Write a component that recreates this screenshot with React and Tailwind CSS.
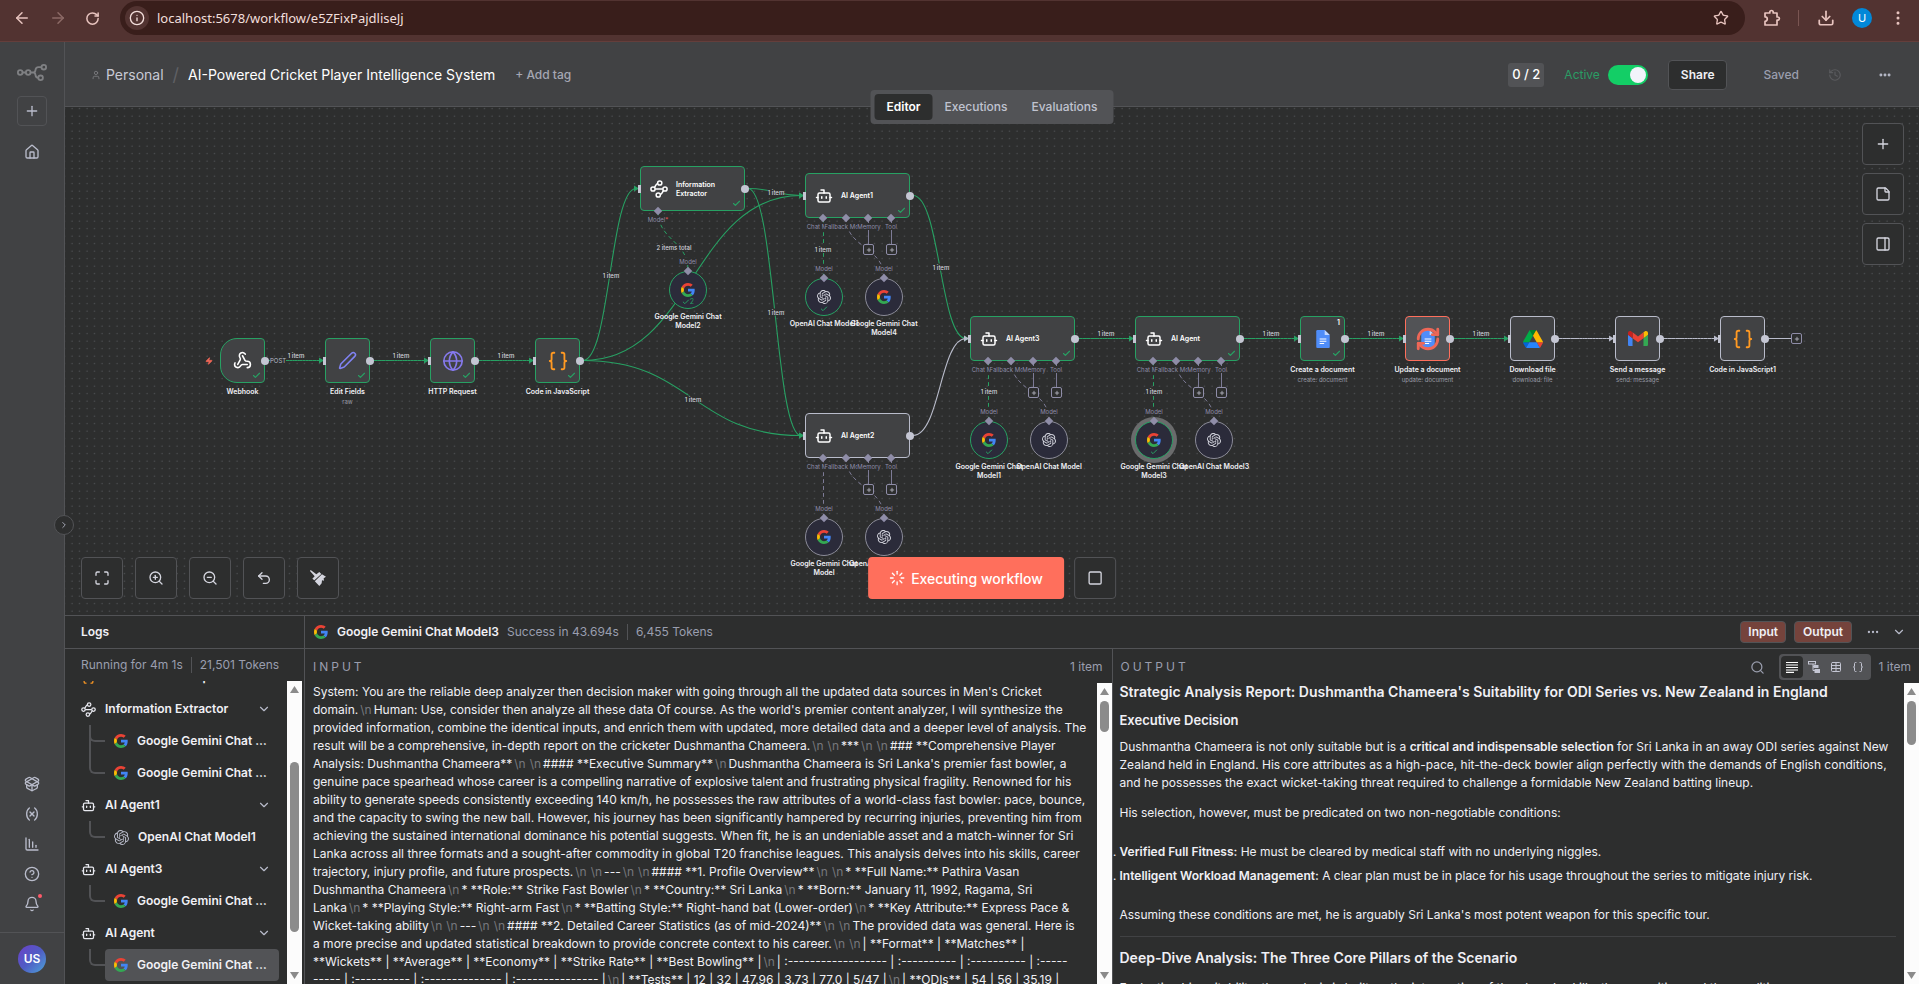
import React from "react";
import {
  ArrowLeft, ArrowRight, RotateCw, Info, Star, Download, EllipsisVertical, Plus, House,
  PackageOpen, Variable, ChartColumnDecreasing, CircleQuestionMark, Bell, ChevronRight, ChevronDown,
  User, History, Ellipsis, StickyNote, PanelRight, Maximize, ZoomIn, ZoomOut, Undo2, Square, Loader,
  Webhook, Pen, Globe, Braces, Bot, Check, Search, Table, Zap, RefreshCw,
} from "lucide-react";
import { SiOpenai } from "react-icons/si";

/* ---------- drawings ---------- */

function GoogleIcon({ className }) {
  return (
    <svg viewBox="0 0 48 48" className={className} aria-hidden="true">
      <path fill="#EA4335" d="M24 9.5c3.54 0 6.71 1.22 9.21 3.6l6.85-6.85C35.9 2.38 30.47 0 24 0 14.62 0 6.51 5.38 2.56 13.22l7.98 6.19C12.43 13.72 17.74 9.5 24 9.5z" />
      <path fill="#4285F4" d="M46.98 24.55c0-1.57-.15-3.09-.38-4.55H24v9.02h12.94c-.58 2.96-2.26 5.48-4.78 7.18l7.73 6c4.51-4.18 7.09-10.36 7.09-17.65z" />
      <path fill="#FBBC05" d="M10.53 28.59c-.48-1.45-.76-2.99-.76-4.59s.27-3.14.76-4.59l-7.98-6.19C.92 16.46 0 20.12 0 24c0 3.88.92 7.54 2.56 10.78l7.97-6.19z" />
      <path fill="#34A853" d="M24 48c6.48 0 11.93-2.13 15.89-5.81l-7.73-6c-2.15 1.45-4.92 2.3-8.16 2.3-6.26 0-11.57-4.22-13.47-9.91l-7.98 6.19C6.51 42.62 14.62 48 24 48z" />
    </svg>
  );
}

function DocsIcon({ className }) {
  return (
    <svg viewBox="0 0 24 32" className={className} aria-hidden="true">
      <path fill="#4f8df9" d="M2 0h13l9 9v21a2 2 0 0 1-2 2H2a2 2 0 0 1-2-2V2a2 2 0 0 1 2-2z" />
      <path fill="#c3d8fd" d="M15 0l9 9h-9z" />
      <path stroke="#fff" strokeWidth="2" d="M6 16h12M6 20h12M6 24h8" />
    </svg>
  );
}

function DriveIcon({ className }) {
  return (
    <svg viewBox="0 0 87.3 78" className={className} aria-hidden="true">
      <path fill="#0066da" d="m6.6 66.85 3.85 6.65c.8 1.4 1.95 2.5 3.3 3.3l13.75-23.8h-27.5c0 1.55.4 3.1 1.2 4.5z" />
      <path fill="#00ac47" d="m43.65 25-13.75-23.8c-1.35.8-2.5 1.9-3.3 3.3l-25.4 44a9.06 9.06 0 0 0 -1.2 4.5h27.5z" />
      <path fill="#ea4335" d="m73.55 76.8c1.35-.8 2.5-1.9 3.3-3.3l1.6-2.75 7.65-13.25c.8-1.4 1.2-2.95 1.2-4.5h-27.502l5.852 11.5z" />
      <path fill="#00832d" d="m43.65 25 13.75-23.8c-1.35-.8-2.9-1.2-4.5-1.2h-18.5c-1.6 0-3.15.45-4.5 1.2z" />
      <path fill="#2684fc" d="m59.8 53h-32.3l-13.75 23.8c1.35.8 2.9 1.2 4.5 1.2h50.8c1.6 0 3.15-.45 4.5-1.2z" />
      <path fill="#ffba00" d="m73.4 26.5-12.7-22c-.8-1.4-1.95-2.5-3.3-3.3l-13.75 23.8 16.15 28h27.45c0-1.55-.4-3.1-1.2-4.5z" />
    </svg>
  );
}

function GmailIcon({ className }) {
  return (
    <svg viewBox="52 42 88 66" className={className} aria-hidden="true">
      <path fill="#4285f4" d="M58 108h14V74L52 59v43c0 3.32 2.69 6 6 6" />
      <path fill="#34a853" d="M120 108h14c3.32 0 6-2.69 6-6V59l-20 15" />
      <path fill="#fbbc04" d="M120 48v26l20-15v-8c0-7.42-8.47-11.65-14.4-7.2" />
      <path fill="#ea4335" d="M72 74V48l24 18 24-18v26L96 92" />
      <path fill="#c5221f" d="M52 51v8l20 15V48l-5.6-4.2c-5.94-4.45-14.4-.22-14.4 7.2" />
    </svg>
  );
}

function ExtractorIcon({ className }) {
  return (
    <svg viewBox="0 0 24 24" fill="none" stroke="currentColor" strokeWidth="2" className={className} aria-hidden="true">
      <circle cx="13" cy="4" r="2.8" />
      <circle cx="4" cy="12" r="2.8" />
      <circle cx="20" cy="12" r="2.8" />
      <circle cx="11" cy="20" r="2.8" />
      <path d="M7 12h10M6 10c2-3 2-5 4.500-5.500M18 14c-2 3-2 5-4.500 5.500" />
    </svg>
  );
}

function LogoIcon({ className }) {
  return (
    <svg viewBox="0 0 30 17" fill="none" stroke="currentColor" strokeWidth="1.8" className={className} aria-hidden="true">
      <circle cx="3.200" cy="8.500" r="2.300" />
      <circle cx="11.200" cy="8.500" r="2.300" />
      <circle cx="26.800" cy="3.200" r="2.300" />
      <circle cx="23.600" cy="13.800" r="2.300" />
      <path d="M5.500 8.500h3.400M13.500 8.500h3.500M24.500 3.200h-3a3 3 0 0 0-3 2.700c-.2 1.800-.8 2.600-2 2.600 1.200 0 1.800.8 2 2.600a3 3 0 0 0 2.800 2.700" />
    </svg>
  );
}

function BroomIcon({ className }) {
  return (
    <svg viewBox="0 0 24 24" fill="currentColor" className={className} aria-hidden="true">
      <path d="M1 0l8.500 6.500L14 3l3 3L6.500 15.500l-3-2.500L7 9.500 0 1.500z" />
      <path d="M18 6.500l6 3.500-3.500 2.500.5 3.500-3-.5-.5 4.500-3.500 4L7.200 17z" />
    </svg>
  );
}

function ExtensionIcon({ className }) {
  return (
    <svg viewBox="0 0 18 18" fill="none" stroke="currentColor" strokeWidth="1.700" strokeLinejoin="round" className={className} aria-hidden="true">
      <path d="M2 4h4.800V3.200a1.700 1.700 0 0 1 3.400 0V4H14v4h.8a1.600 1.600 0 0 1 0 3.200H14V16H2v-3.600a2.300 2.300 0 0 0 0-4.600z" />
    </svg>
  );
}

function TextLinesIcon({ className }) {
  return (
    <svg viewBox="0 0 12 12" stroke="currentColor" strokeWidth="1.200" className={className} aria-hidden="true">
      <path d="M0 1.500h12M0 4h12M0 6.500h12M0 9h12M0 11.400h8" />
    </svg>
  );
}

function SchemaIcon({ className }) {
  return (
    <svg viewBox="0 0 12 12" fill="none" stroke="currentColor" className={className} aria-hidden="true">
      <rect x="0.500" y="0.500" width="7" height="2.500" />
      <path d="M5 3v6.500h2M5 5.500h2" />
      <rect x="6" y="4.500" width="4" height="2" fill="currentColor" />
      <rect x="7" y="8.500" width="4.500" height="3" fill="currentColor" />
    </svg>
  );
}

/* ---------- canvas data ---------- */

const NODES = [
  { x: 155, y: 231, label: "Webhook", icon: <Webhook className="size-[19px]" strokeWidth={2} />, tint: "text-white", status: "ok", trigger: true },
  { x: 260, y: 231, label: "Edit Fields", sub: "raw", icon: <Pen className="size-[19px]" strokeWidth={2} />, tint: "text-[#8183f4]", status: "ok" },
  { x: 365, y: 231, label: "HTTP Request", icon: <Globe className="size-[22px]" strokeWidth={1.8} />, tint: "text-[#8579ec]", status: "ok" },
  { x: 470, y: 231, label: "Code in JavaScript", icon: <Braces className="size-[22px]" strokeWidth={2} />, tint: "text-[#ff9922]", status: "ok" },
  { x: 1235, y: 209, label: "Create a document", sub: "create: document", icon: <DocsIcon className="h-[18px] w-[14px]" />, status: "ok", badge: "1" },
  { x: 1340, y: 209, label: "Update a document", sub: "update: document", icon: <DocsIcon className="h-[18px] w-[14px]" />, status: "running" },
  { x: 1445, y: 209, label: "Download file", sub: "download: file", icon: <DriveIcon className="h-[18px] w-[20px]" />, status: "idle" },
  { x: 1550, y: 209, label: "Send a message", sub: "send: message", icon: <GmailIcon className="h-[15px] w-[20px]" />, status: "idle" },
  { x: 1655, y: 209, label: "Code in JavaScript1", icon: <Braces className="size-[22px]" strokeWidth={2} />, tint: "text-[#ff9922]", status: "idle" },
];

const AGENTS = [
  { x: 740, y: 66, label: "AI Agent1", ok: true },
  { x: 740, y: 306, label: "AI Agent2", ok: false },
  { x: 905, y: 209, label: "AI Agent3", ok: true },
  { x: 1070, y: 209, label: "AI Agent", ok: true },
];

const MODELS = [
  { x: 604, y: 164, label: "Google Gemini Chat Model2", kind: "google", ok: true, runs: "2" },
  { x: 740, y: 171, label: "OpenAI Chat Model1", kind: "openai", ok: true },
  { x: 800, y: 171, label: "Google Gemini Chat Model4", kind: "google" },
  { x: 740, y: 411, label: "Google Gemini Chat Model", kind: "google" },
  { x: 800, y: 411, label: "OpenAI Chat Model2", kind: "openai" },
  { x: 905, y: 314, label: "Google Gemini Chat Model1", kind: "google", ok: true },
  { x: 965, y: 314, label: "OpenAI Chat Model", kind: "openai" },
  { x: 1070, y: 314, label: "Google Gemini Chat Model3", kind: "google", ok: true, selected: true },
  { x: 1130, y: 314, label: "OpenAI Chat Model3", kind: "openai" },
];

const EDGES = [
  { from: [200, 253.5], to: [260, 253.5], ok: true },
  { from: [305, 253.5], to: [365, 253.5], ok: true },
  { from: [410, 253.5], to: [470, 253.5], ok: true },
  { from: [515, 253.5], to: [575, 81.5], ok: true },
  { from: [515, 253.5], to: [740, 88.5], ok: true },
  { from: [515, 253.5], to: [740, 328.5], ok: true },
  { from: [680, 81.5], to: [740, 88.5], ok: true },
  { from: [680, 81.5], to: [740, 328.5], ok: true },
  { from: [845, 88.5], to: [905, 231.5], ok: true },
  { from: [845, 328.5], to: [905, 231.5], ok: false },
  { from: [1010, 231.5], to: [1070, 231.5], ok: true },
  { from: [1175, 231.5], to: [1235, 231.5], ok: true },
  { from: [1280, 231.5], to: [1340, 231.5], ok: true },
  { from: [1385, 231.5], to: [1445, 231.5], ok: true },
  { from: [1490, 231.5], to: [1550, 231.5], ok: false },
  { from: [1595, 231.5], to: [1655, 231.5], ok: false },
];

const EDGE_LABELS = [
  [231, 248], [336, 248], [441, 248], [546, 168], [628, 292], [711, 85], [711, 205], [876, 160],
  [1041, 226], [1206, 226], [1311, 226], [1416, 226], [758, 142], [924, 284], [1089, 284],
];

const SUB_EDGES = [
  { from: [593, 104], to: [623, 163], ok: true },
  { from: [758.5, 111], to: [758.5, 170], ok: true },
  { from: [781, 111], to: [819, 170] },
  { from: [758.5, 351], to: [758.5, 410] },
  { from: [781, 351], to: [819, 410] },
  { from: [923.5, 254], to: [923.5, 313], ok: true },
  { from: [946, 254], to: [984, 313] },
  { from: [1088.5, 254], to: [1088.5, 313], ok: true },
  { from: [1111, 254], to: [1149, 313] },
];

const GREEN = "#27a163";
const PALE = "#b9bccb";
const VIOLET = "#7d7b96";

function Edges() {
  return (
    <svg className="absolute inset-0 size-full" fill="none" aria-hidden="true">
      <defs>
        <pattern id="dots" x="3" y="5" width="7.5" height="7.5" patternUnits="userSpaceOnUse">
          <circle cx="4" cy="4" r="0.600" fill="#63656a" />
        </pattern>
      </defs>
      <rect width="100%" height="100%" fill="url(#dots)" />
      {SUB_EDGES.map(({ from: [a, b], to: [c, d], ok }) => (
        <path key={`${a}-${b}`} stroke={ok ? GREEN : VIOLET} strokeDasharray="4 3" d={`M${a} ${b}C${a} ${(b + d) / 2} ${c} ${(b + d) / 2} ${c} ${d}`} />
      ))}
      {AGENTS.map(({ x, y }) => (
        <path key={`${x}-${y}`} stroke={VIOLET} d={`M${x + 63.5} ${y + 45}v26M${x + 86.5} ${y + 45}v26`} />
      ))}
      {EDGES.map(({ from: [a, b], to: [c, d], ok }) => {
        const m = (a + c) / 2;
        const color = ok ? GREEN : PALE;
        return (
          <g key={`${a}-${b}-${c}-${d}`}>
            <path stroke={color} strokeWidth={b === d ? 1 : 1.1} d={`M${a + 3} ${b}C${m} ${b} ${m} ${d} ${c - 4} ${d}`} />
            <path fill={color} d={`M${c - 6} ${d - 3}l5 3l-5 3z`} />
          </g>
        );
      })}
      <path stroke={PALE} d="M1703 231.5h23" />
    </svg>
  );
}

function OutputHandle() {
  return <span className="absolute top-1/2 -right-1 size-2 -translate-y-1/2 rounded-full bg-[#c4c6d3]" />;
}
function InputHandle() {
  return <span className="absolute top-1/2 -left-[2px] h-2 w-[3px] -translate-y-1/2 bg-[#c4c6d3]" />;
}
function Diamond({ className }) {
  return <span className={`absolute size-[6px] rotate-45 bg-[#8f8da8] ${className}`} />;
}
function NodeCheck({ className }) {
  return <Check className={`absolute size-[9px] text-[#27a163] ${className}`} strokeWidth={3} />;
}
function AddBox({ className }) {
  return (
    <button type="button" aria-label="Add node" className={`absolute flex size-[11px] items-center justify-center rounded-[2px] border border-[#8f8da8] bg-[#2d2e2e] text-[#c4c6d3] ${className}`}>
      <Plus className="size-[6px]" strokeWidth={3} />
    </button>
  );
}
function SlotLabel({ className, children }) {
  return <span className={`absolute -translate-x-1/2 bg-[#2d2e2e] text-[6px] leading-[7px] whitespace-nowrap text-[#8f8da8] ${className}`}>{children}</span>;
}

const BORDERS = {
  ok: "border-[#27a163] bg-[#414244]",
  idle: "border-[#b9bccb] bg-[#414244]",
  running: "border-[#ff6f5c] bg-[#525356]",
};

function SquareNode({ x, y, label, sub, icon, tint = "", status, trigger, badge }) {
  return (
    <div className="absolute size-[45px]" style={{ left: x, top: y }}>
      <div className={`relative flex size-full items-center justify-center border ${trigger ? "rounded-l-[17px] rounded-r-[4px]" : "rounded-[4px]"} ${BORDERS[status]} ${tint}`}>
        {icon}
        {status === "ok" && <NodeCheck className="right-[3px] bottom-[2px]" />}
        {badge && <span className="absolute top-[2px] right-1 text-[7px] leading-2 font-semibold text-white">{badge}</span>}
        {status === "running" && <RefreshCw className="absolute size-[26px] text-[#ee6757]" strokeWidth={2.6} />}
      </div>
      {!trigger && <InputHandle />}
      <OutputHandle />
      <div className="absolute top-[49px] left-1/2 flex -translate-x-1/2 flex-col items-center gap-[2px] whitespace-nowrap">
        <span className="text-[7px] leading-[9px] font-semibold text-[#f0f0f5]">{label}</span>
        {sub && <span className="text-[6px] leading-[8px] text-[#9a9ca6]">{sub}</span>}
      </div>
    </div>
  );
}

function AgentNode({ x, y, label, ok }) {
  return (
    <div className="absolute h-[45px] w-[105px]" style={{ left: x, top: y }}>
      <div className={`flex size-full items-center gap-2 rounded-[4px] border pl-[9px] ${ok ? BORDERS.ok : BORDERS.idle}`}>
        <Bot className="size-[18px] text-white" strokeWidth={2} />
        <span className="text-[7px] leading-[9px] font-semibold text-white">{label}</span>
      </div>
      {ok && <NodeCheck className="right-1 bottom-[3px]" />}
      <InputHandle />
      <OutputHandle />
      <SlotLabel className="top-[50px] left-[18px]">Chat Model</SlotLabel>
      <SlotLabel className="top-[50px] left-[41px]">Fallback Model</SlotLabel>
      <SlotLabel className="top-[50px] left-[64px]">Memory</SlotLabel>
      <SlotLabel className="top-[50px] left-[86px]">Tool</SlotLabel>
      <Diamond className="top-[42px] left-[15px]" />
      <Diamond className="top-[42px] left-[38px]" />
      <Diamond className="top-[42px] left-[60px]" />
      <Diamond className="top-[42px] left-[83px]" />
      <AddBox className="top-[71px] left-[58px]" />
      <AddBox className="top-[71px] left-[81px]" />
    </div>
  );
}

function ModelNode({ x, y, label, kind, ok, runs, selected }) {
  return (
    <div className="absolute size-[38px]" style={{ left: x, top: y }}>
      <div className={`flex size-full items-center justify-center rounded-full border bg-[#2b2b3a] ${ok ? "border-[#27a163]" : "border-[#8b8b98]"} ${selected ? "ring-4 ring-[#6a6b6c]" : ""}`}>
        {kind === "google" ? <GoogleIcon className="size-[14px]" /> : <SiOpenai className="size-[14px] text-[#d5d6df]" />}
      </div>
      {ok && (
        <div className="absolute bottom-[3px] left-1/2 flex -translate-x-1/2 items-center text-[7px] leading-2 text-[#27a163]">
          <Check className="size-2" strokeWidth={3} />
          {runs}
        </div>
      )}
      <SlotLabel className="-top-[13px] left-[19px]">Model</SlotLabel>
      <Diamond className="-top-[3px] left-4" />
      <div className="absolute top-[41px] left-1/2 w-[78px] -translate-x-1/2 text-center text-[7px] leading-[9px] font-semibold text-[#f0f0f5]">{label}</div>
    </div>
  );
}

const CONTROL = "flex size-[42px] items-center justify-center rounded-[4px] border border-[#525356] bg-[#2d2e2e] text-[#d5d6df]";

function Canvas() {
  return (
    <main className="relative min-h-0 flex-1 overflow-hidden bg-[#2d2e2e]">
      <Edges />
      {EDGE_LABELS.map(([x, y]) => (
        <span key={`${x}-${y}`} className="absolute -translate-x-1/2 -translate-y-1/2 bg-[#2d2e2e] text-[6px] leading-[7px] font-medium whitespace-nowrap text-[#d5d6df]" style={{ left: x, top: y }}>1 item</span>
      ))}
      <span className="absolute top-[97px] left-[609px] -translate-x-1/2 translate-y-[40px] bg-[#2d2e2e] text-[6px] leading-[7px] font-medium whitespace-nowrap text-[#d5d6df]">2 items total</span>
      {MODELS.map((m) => <ModelNode key={m.label} {...m} />)}
      {AGENTS.map((a) => <AgentNode key={a.label} {...a} />)}
      <div className="absolute top-[59px] left-[575px] h-[45px] w-[105px]">
        <div className={`flex size-full items-center gap-2 rounded-[4px] border pl-[9px] ${BORDERS.ok}`}>
          <ExtractorIcon className="size-[18px] text-white" />
          <span className="w-[50px] text-[7px] leading-[9px] font-semibold text-white">Information Extractor</span>
        </div>
        <NodeCheck className="right-1 bottom-[3px]" />
        <InputHandle />
        <OutputHandle />
        <SlotLabel className="top-[50px] left-[18px]">Model<span className="text-[#ff5a5a]">*</span></SlotLabel>
        <Diamond className="top-[42px] left-[15px]" />
      </div>
      {NODES.map((n) => <SquareNode key={n.label} {...n} />)}
      <Zap className="absolute top-[250px] left-[140px] size-2 fill-[#ee6757] text-[#ee6757]" />
      <span className="absolute top-[250px] left-[205px] bg-[#2d2e2e] text-[6px] leading-[7px] text-[#b9bccb]">POST</span>
      <AddBox className="top-[226px] left-[1726px]" />

      <div className="absolute top-4 right-[15px] flex flex-col gap-2">
        <button type="button" aria-label="Add node" className={CONTROL}><Plus className="size-4" /></button>
        <button type="button" aria-label="Add sticky note" className={CONTROL}><StickyNote className="size-4" /></button>
        <button type="button" aria-label="Toggle panel" className={CONTROL}><PanelRight className="size-4" /></button>
      </div>

      <div className="absolute bottom-4 left-4 flex gap-3">
        <button type="button" aria-label="Fit view" className={CONTROL}><Maximize className="size-4" /></button>
        <button type="button" aria-label="Zoom in" className={CONTROL}><ZoomIn className="size-4" /></button>
        <button type="button" aria-label="Zoom out" className={CONTROL}><ZoomOut className="size-4" /></button>
        <button type="button" aria-label="Undo" className={CONTROL}><Undo2 className="size-4" /></button>
        <button type="button" aria-label="Tidy up" className={CONTROL}><BroomIcon className="size-4" /></button>
      </div>

      <div className="absolute bottom-4 left-1/2 flex -translate-x-1/2 gap-[10px]">
        <button type="button" className="flex h-[42px] items-center gap-[6px] rounded-[4px] bg-[#ff6f5c] px-[21px] text-[14px] font-medium whitespace-nowrap text-white">
          <Loader className="size-4" />
          Executing workflow
        </button>
        <button type="button" aria-label="Stop" className={CONTROL}><Square className="size-4" /></button>
      </div>
    </main>
  );
}

/* ---------- chrome around the canvas ---------- */

function BrowserBar() {
  return (
    <div className="flex h-[42px] shrink-0 items-start border-b border-[#643e3b] bg-[#523331] text-[#e8c4bf]">
      <div className="flex h-9 w-[120px] items-center gap-[18px] pl-[13px]">
        <button type="button" aria-label="Back"><ArrowLeft className="size-[18px]" /></button>
        <button type="button" aria-label="Forward" className="text-[#8c6a66]"><ArrowRight className="size-[18px]" /></button>
        <button type="button" aria-label="Reload"><RotateCw className="size-[15px]" strokeWidth={2.4} /></button>
      </div>
      <div className="mt-px flex h-[34px] flex-1 items-center rounded-full bg-[#391e1b] pr-4 pl-[5px]">
        <button type="button" aria-label="Site information" className="flex size-6 items-center justify-center rounded-full bg-[#523331] text-[#f3dedb]"><Info className="size-4" /></button>
        <input aria-label="Address" defaultValue="localhost:5678/workflow/e5ZFixPajdliseJj" className="ml-2 h-full min-w-0 flex-1 bg-transparent font-['Noto_Sans',sans-serif] text-[13px] text-[#f1dfdc] outline-none" />
        <button type="button" aria-label="Bookmark"><Star className="size-4" /></button>
      </div>
      <div className="flex h-9 items-center pr-3 pl-[18px]">
        <button type="button" aria-label="Extensions"><ExtensionIcon className="size-[18px]" /></button>
        <span className="ml-[17px] h-4 w-px bg-[#7a5552]" />
        <button type="button" aria-label="Downloads" className="ml-[18px]"><Download className="size-[18px]" strokeWidth={2.3} /></button>
        <button type="button" aria-label="Profile" className="ml-[17px] flex size-5 items-center justify-center rounded-full bg-[#0288d8] text-[11px] text-white">U</button>
        <button type="button" aria-label="Browser menu" className="ml-[17px]"><EllipsisVertical className="size-[18px]" /></button>
      </div>
    </div>
  );
}

function Sidebar() {
  return (
    <nav className="relative flex w-[65px] shrink-0 flex-col items-center border-r border-[#525356] bg-[#414244] text-[#b9bccb]">
      <LogoIcon className="mt-[22px] h-[17px] w-[30px] text-[#7f8083]" />
      <button type="button" aria-label="Create" className="mt-[15px] flex size-[30px] items-center justify-center rounded-[4px] border border-[#525356]"><Plus className="size-4" /></button>
      <a href="#home" aria-label="Home" className="mt-[18px]"><House className="size-4" /></a>
      <div className="mt-auto flex flex-col gap-[14px] pb-5">
        <a href="#templates" aria-label="Templates"><PackageOpen className="size-4" /></a>
        <a href="#variables" aria-label="Variables"><Variable className="size-4" /></a>
        <a href="#insights" aria-label="Insights"><ChartColumnDecreasing className="size-4" /></a>
        <a href="#help" aria-label="Help"><CircleQuestionMark className="size-4" /></a>
        <a href="#news" aria-label="What's new" className="relative">
          <Bell className="size-4" />
          <span className="absolute -top-[2px] -right-[2px] size-1 rounded-full bg-[#ff5a6a]" />
        </a>
      </div>
      <div className="flex h-[52px] w-full items-center justify-center border-t border-[#525356]">
        <button type="button" className="size-7 rounded-full bg-linear-to-br from-[#6a3fc8] via-[#4f5bc4] to-[#4aa3d8] text-[12px] font-semibold text-white">US</button>
      </div>
      <button type="button" aria-label="Expand sidebar" className="absolute top-[473px] -right-[10px] z-10 flex size-5 items-center justify-center rounded-full border border-[#525356] bg-[#2d2e2e]"><ChevronRight className="size-[10px]" /></button>
    </nav>
  );
}

function Header() {
  return (
    <header className="flex h-[65px] shrink-0 items-center justify-between border-b border-[#525356] bg-[#414244] pt-px pr-[27px] pl-[26px] text-[12px] text-[#b9bccb]">
      <div className="flex items-center text-[14px]">
        <User className="size-[10px] text-[#7f8083]" />
        <a href="#personal" className="ml-[5px] text-[#c8cad6]">Personal</a>
        <span className="mx-[9px] text-[18px] text-[#5f6064]">/</span>
        <h1 className="text-white">AI-Powered Cricket Player Intelligence System</h1>
        <button type="button" className="ml-5 text-[12px] font-medium text-[#a5a7b3]">+ Add tag</button>
      </div>
      <div className="flex items-center">
        <span className="flex h-6 items-center rounded-[3px] bg-[#525356] px-1 text-[13px] font-medium text-white">0 / 2</span>
        <label className="ml-5 flex items-center gap-2 text-[#2a9d64]">
          Active
          <input type="checkbox" defaultChecked className="flex h-5 w-10 appearance-none items-center justify-end rounded-full bg-[#13ce66] px-[2px] before:size-4 before:rounded-full before:bg-[#f2f3fa]" />
        </label>
        <button type="button" className="ml-5 h-[30px] rounded-[4px] border border-[#525356] bg-[#2d2e2e] px-3 font-semibold text-[#f0f0f5]">Share</button>
        <span className="ml-9 font-medium text-[#9a9eae]">Saved</span>
        <button type="button" aria-label="History" className="ml-[29px] text-[#5a5b5e]"><History className="size-[14px]" /></button>
        <button type="button" aria-label="More" className="ml-9"><Ellipsis className="size-[14px]" strokeWidth={3} /></button>
      </div>
    </header>
  );
}

function Tabs() {
  return (
    <div role="tablist" className="absolute top-12 left-1/2 z-10 flex -translate-x-1/2 rounded-[4px] bg-[#525356] p-1 text-[12px] font-medium text-[#c0c3d0]">
      <button type="button" role="tab" aria-selected="true" className="h-[26px] rounded-[4px] bg-[#2d2e2e] px-3 font-semibold text-white">Editor</button>
      <button type="button" role="tab" aria-selected="false" className="h-[26px] px-3">Executions</button>
      <button type="button" role="tab" aria-selected="false" className="h-[26px] px-3">Evaluations</button>
    </div>
  );
}

/* ---------- logs panel ---------- */

function Scrollbar({ children }) {
  return (
    <div className="flex w-[15px] shrink-0 flex-col items-center justify-between bg-[#fcfcfc] py-[5px]" aria-hidden="true">
      <svg viewBox="0 0 9 7" className="h-[7px] w-[9px]"><path fill="#8b8b8b" d="M4.500 0 9 7H0z" /></svg>
      <div className="w-[9px] flex-1 py-[6px]">{children}</div>
      <svg viewBox="0 0 9 7" className="h-[7px] w-[9px]"><path fill="#8b8b8b" d="M4.500 7 9 0H0z" /></svg>
    </div>
  );
}

const LOGS = [
  { label: "Code in JavaScript", kind: "code" },
  { label: "Information Extractor", kind: "extractor", open: true },
  { label: "Google Gemini Chat Model2", kind: "google", child: "mid" },
  { label: "Google Gemini Chat Model2", kind: "google", child: "last" },
  { label: "AI Agent1", kind: "bot", open: true },
  { label: "OpenAI Chat Model1", kind: "openai", child: "last" },
  { label: "AI Agent3", kind: "bot", open: true },
  { label: "Google Gemini Chat Model1", kind: "google", child: "last" },
  { label: "AI Agent", kind: "bot", open: true },
  { label: "Google Gemini Chat Model3", kind: "google", child: "last", active: true },
];

function LogIcon({ kind }) {
  if (kind === "google") return <GoogleIcon className="size-[14px] shrink-0" />;
  if (kind === "openai") return <SiOpenai className="size-[15px] shrink-0 text-[#b9bccb]" />;
  if (kind === "bot") return <Bot className="size-[15px] shrink-0 text-[#e8e9f0]" />;
  if (kind === "code") return <Braces className="size-[15px] shrink-0 text-[#ff9922]" />;
  return <ExtractorIcon className="size-[15px] shrink-0 text-[#e8e9f0]" />;
}

function LogRow({ label, kind, open, child, active }) {
  if (child) {
    return (
      <li className="flex h-8 pl-6">
        <span className={`relative w-4 shrink-0 ${child === "mid" ? "border-l-2 border-[#525356]" : ""}`}>
          <span className={`absolute top-0 h-[17px] w-4 rounded-bl-[6px] border-b-2 border-l-2 border-[#525356] ${child === "mid" ? "-left-[2px]" : "left-0"}`} />
        </span>
        <button type="button" className={`flex w-[174px] items-center gap-[9px] rounded-[4px] px-[9px] font-semibold ${active ? "bg-[#525356]" : ""}`}>
          <LogIcon kind={kind} />
          <span className="truncate">{label}</span>
        </button>
      </li>
    );
  }
  return (
    <li className="flex h-8 items-center gap-[9px] pr-4 pl-4 font-semibold">
      <LogIcon kind={kind} />
      <span className="flex-1">{label}</span>
      {open && <button type="button" aria-label={`Collapse ${label}`}><ChevronDown className="size-[14px] text-[#b9bccb]" /></button>}
    </li>
  );
}

const INPUT_LINES = [
  "System: You are the reliable deep analyzer then decision maker with going through all the updated data sources in Men's Cricket",
  "domain.\\nHuman: Use, consider then analyze all these data Of course. As the world's premier content analyzer, I will synthesize the",
  "provided information, combine the identical inputs, and enrich them with updated, more detailed data and a deeper level of analysis. The",
  "result will be a comprehensive, in-depth report on the cricketer Dushmantha Chameera.\\n\\n***\\n\\n### **Comprehensive Player",
  "Analysis: Dushmantha Chameera**\\n\\n#### **Executive Summary**\\nDushmantha Chameera is Sri Lanka's premier fast bowler, a",
  "genuine pace spearhead whose career is a compelling narrative of explosive talent and frustrating physical fragility. Renowned for his",
  "ability to generate speeds consistently exceeding 140 km/h, he possesses the raw attributes of a world-class fast bowler: pace, bounce,",
  "and the capacity to swing the new ball. However, his journey has been significantly hampered by recurring injuries, preventing him from",
  "achieving the sustained international dominance his potential suggests. When fit, he is an undeniable asset and a match-winner for Sri",
  "Lanka across all three formats and a sought-after commodity in global T20 franchise leagues. This analysis delves into his skills, career",
  "trajectory, injury profile, and future prospects.\\n\\n---\\n\\n#### **1. Profile Overview**\\n\\n* **Full Name:** Pathira Vasan",
  "Dushmantha Chameera\\n* **Role:** Strike Fast Bowler\\n* **Country:** Sri Lanka\\n* **Born:** January 11, 1992, Ragama, Sri",
  "Lanka\\n* **Playing Style:** Right-arm Fast\\n* **Batting Style:** Right-hand bat (Lower-order)\\n* **Key Attribute:** Express Pace &",
  "Wicket-taking ability\\n\\n---\\n\\n#### **2. Detailed Career Statistics (as of mid-2024)**\\n\\nThe provided data was general. Here is",
  "a more precise and updated statistical breakdown to provide concrete context to his career.\\n\\n| **Format** | **Matches** |",
  "**Wickets** | **Average** | **Economy** | **Strike Rate** | **Best Bowling** |\\n| :------------------ | :---------- | :---------- | :-----",
  "----- | :---------- | :-------------- | :--------------- |\\n| **Tests** | 12 | 32 | 47.96 | 3.73 | 77.0 | 5/47 |\\n| **ODIs** | 54 | 56 | 35.19 |",
];

function InputLine({ text }) {
  return (
    <p className="whitespace-nowrap">
      {text.split("\\n").map((part, i) => (
        <React.Fragment key={i}>
          {i > 0 && <span className="px-[2px] text-[#77787d]">\n</span>}
          {part}
        </React.Fragment>
      ))}
    </p>
  );
}

const VIEW = "flex h-[22px] w-[22px] items-center justify-center rounded-[4px]";

function LogsPanel() {
  return (
    <section className="flex h-[37.5vh] shrink-0 border-t border-[#525356] bg-[#2d2e2e] text-[12px] text-[#f0f0f5]">
      <div className="flex w-[240px] shrink-0 flex-col border-r border-[#525356]">
        <h2 className="flex h-[33px] shrink-0 items-center border-b border-[#525356] pl-4 font-semibold">Logs</h2>
        <div className="flex h-8 shrink-0 items-center pl-4 text-[#9a9eae]">
          Running for 4m 1s
          <span className="mx-2 h-4 w-px bg-[#525356]" />
          21,501 Tokens
        </div>
        <div className="flex min-h-0 flex-1 justify-between pr-[2px]">
          <div className="min-w-0 flex-1 overflow-hidden">
            <ul className="-mt-5">
              {LOGS.map((row, i) => <LogRow key={i} {...row} />)}
            </ul>
          </div>
          <Scrollbar><div className="mt-[63px] h-[170px] rounded-full bg-[#8b8b8b]" /></Scrollbar>
        </div>
      </div>
      <div className="flex min-w-0 flex-1 flex-col">
        <div className="flex h-[33px] shrink-0 items-center border-b border-[#525356] pr-[13px] pl-[9px]">
          <GoogleIcon className="size-[14px]" />
          <h2 className="ml-[9px] font-semibold">Google Gemini Chat Model3</h2>
          <span className="ml-2 text-[#9a9eae]">Success in 43.694s</span>
          <span className="mx-2 h-4 w-px bg-[#525356]" />
          <span className="text-[#9a9eae]">6,455 Tokens</span>
          <button type="button" className="ml-auto h-[22px] rounded-[4px] border border-[#525356] bg-[#75433c] px-[7px] font-semibold">Input</button>
          <button type="button" className="ml-2 h-[22px] rounded-[4px] border border-[#525356] bg-[#75433c] px-2 font-semibold">Output</button>
          <button type="button" aria-label="More" className="ml-[14px] text-[#b9bccb]"><Ellipsis className="size-[14px]" /></button>
          <button type="button" aria-label="Collapse panel" className="ml-3 text-[#b9bccb]"><ChevronDown className="size-[14px]" /></button>
        </div>
        <div className="flex min-h-0 flex-1">
          <div className="flex min-w-0 flex-1 flex-col border-r border-[#525356]">
            <div className="flex h-[34px] shrink-0 items-center justify-between pr-[9px] pl-2 pt-[2px] text-[#9a9eae]">
              <h3 className="tracking-[3px]">INPUT</h3>
              <span>1 item</span>
            </div>
            <div className="flex min-h-0 flex-1">
              <div className="min-w-0 flex-1 overflow-hidden pl-2 leading-[18px]">
                {INPUT_LINES.map((line) => <InputLine key={line} text={line} />)}
              </div>
              <Scrollbar><div className="h-[31px] rounded-full bg-[#8b8b8b]" /></Scrollbar>
            </div>
          </div>
          <div className="flex min-w-0 flex-1 flex-col">
            <div className="flex h-[34px] shrink-0 items-center pr-2 pl-2 pt-[2px] text-[#9a9eae]">
              <h3 className="flex-1 tracking-[3px]">OUTPUT</h3>
              <button type="button" aria-label="Search" className="mr-[14px]"><Search className="size-[15px]" /></button>
              <div className="flex items-center rounded-[4px] bg-[#525356] p-[2px] text-[#c4c6d3]">
                <button type="button" aria-label="Text" className={`${VIEW} bg-[#2d2e2e] text-white`}><TextLinesIcon className="size-3" /></button>
                <button type="button" aria-label="Schema" className={VIEW}><SchemaIcon className="size-3" /></button>
                <button type="button" aria-label="Table" className={VIEW}><Table className="size-3" /></button>
                <button type="button" aria-label="JSON" className={VIEW}><Braces className="size-3" /></button>
              </div>
              <span className="ml-2">1 item</span>
            </div>
            <div className="flex min-h-0 flex-1">
              <article className="min-w-0 flex-1 overflow-hidden pr-2 pl-[7px] leading-[18px]">
                <h4 className="text-[14px] leading-[18px] font-semibold">Strategic Analysis Report: Dushmantha Chameera's Suitability for ODI Series vs. New Zealand in England</h4>
                <h5 className="mt-[10px] text-[13px] leading-[18px] font-semibold">Executive Decision</h5>
                <p className="mt-[9px]">
                  Dushmantha Chameera is not only suitable but is a <strong className="font-semibold">critical and indispensable selection</strong> for Sri Lanka in an away ODI series against New Zealand held in England. His core attributes as a high-pace, hit-the-deck bowler align perfectly with the demands of English conditions, and he possesses the exact wicket-taking threat required to challenge a formidable New Zealand batting lineup.
                </p>
                <p className="mt-3">His selection, however, must be predicated on two non-negotiable conditions:</p>
                <ol className="mt-[21px] flex list-decimal flex-col gap-[6px]">
                  <li><strong className="font-semibold">Verified Full Fitness:</strong> He must be cleared by medical staff with no underlying niggles.</li>
                  <li><strong className="font-semibold">Intelligent Workload Management:</strong> A clear plan must be in place for his usage throughout the series to mitigate injury risk.</li>
                </ol>
                <p className="mt-[21px]">Assuming these conditions are met, he is arguably Sri Lanka's most potent weapon for this specific tour.</p>
                <hr className="mt-3 border-[#414244]" />
                <h4 className="mt-3 text-[14px] leading-[18px] font-semibold">Deep-Dive Analysis: The Three Core Pillars of the Scenario</h4>
                <p className="mt-3">Evaluating his suitability, the analysis is built on the intersection of the player's skills, the opposition and the conditions.</p>
              </article>
              <Scrollbar><div className="h-[44px] rounded-full bg-[#8b8b8b]" /></Scrollbar>
            </div>
          </div>
        </div>
      </div>
    </section>
  );
}

export default function App() {
  return (
    <div className="flex h-screen flex-col overflow-hidden bg-[#2d2e2e] font-[Inter,sans-serif]">
      <BrowserBar />
      <div className="flex min-h-0 flex-1">
        <Sidebar />
        <div className="relative flex min-w-0 flex-1 flex-col">
          <Header />
          <Tabs />
          <Canvas />
          <LogsPanel />
        </div>
      </div>
    </div>
  );
}
